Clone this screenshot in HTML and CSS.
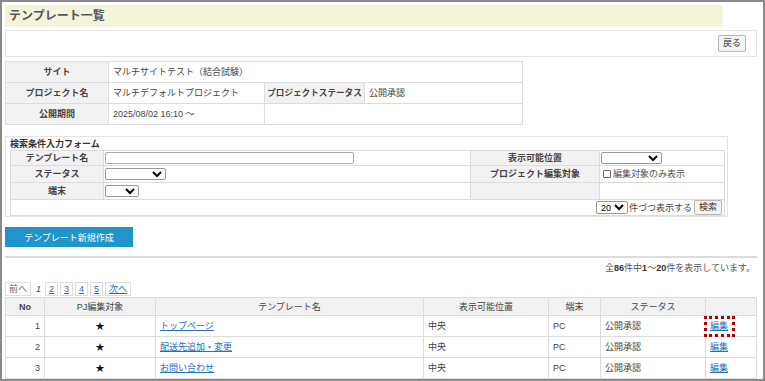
FILE: index.html
```html
<!DOCTYPE html>
<html lang="ja">
<head>
    <meta charset="UTF-8">
    <title>テンプレート一覧</title>
    <link rel="stylesheet" href="styles.css">
</head>
<body>
    <div class="frame">
        <h1 class="page-title">テンプレート一覧</h1>

        <div class="tool-box">
            <button class="btn">戻る</button>
        </div>

        <table class="info-table">
            <colgroup>
                <col class="w-label">
                <col class="w-value">
                <col class="w-label2">
                <col>
            </colgroup>
            <tr>
                <th>サイト</th>
                <td colspan="3">マルチサイトテスト（結合試験）</td>
            </tr>
            <tr>
                <th>プロジェクト名</th>
                <td>マルチデフォルトプロジェクト</td>
                <th class="narrow">プロジェクトステータス</th>
                <td>公開承認</td>
            </tr>
            <tr>
                <th>公開期間</th>
                <td>2025/08/02 16:10 ～</td>
                <td colspan="2"></td>
            </tr>
        </table>

        <div class="search-box">
            <div class="search-title">検索条件入力フォーム</div>
            <table class="search-table">
                <colgroup>
                    <col class="s-label">
                    <col class="s-input">
                    <col class="s-label2">
                    <col>
                </colgroup>
                <tr class="first">
                    <th>テンプレート名</th>
                    <td><input type="text" class="text-input"></td>
                    <th>表示可能位置</th>
                    <td><select class="sel sel-pos"></select></td>
                </tr>
                <tr>
                    <th>ステータス</th>
                    <td><select class="sel sel-status"></select></td>
                    <th>プロジェクト編集対象</th>
                    <td><label class="check"><span class="box"></span>編集対象のみ表示</label></td>
                </tr>
                <tr>
                    <th>端末</th>
                    <td><select class="sel sel-device"></select></td>
                    <th></th>
                    <td></td>
                </tr>
                <tr class="last">
                    <td colspan="4">
                        <div class="search-actions">
                            <select class="sel sel-count"><option>20</option></select><span class="per">件づつ表示する</span><button class="btn">検索</button>
                        </div>
                    </td>
                </tr>
            </table>
        </div>

        <div class="create-row">
            <button class="btn-primary">テンプレート新規作成</button>
        </div>

        <div class="count">全<b>86</b>件中<b>1</b>～<b>20</b>件を表示しています。</div>

        <div class="pager">
            <span class="page disabled">前へ</span>
            <span class="current">1</span>
            <a class="page" href="#">2</a>
            <a class="page" href="#">3</a>
            <a class="page" href="#">4</a>
            <a class="page" href="#">5</a>
            <a class="page" href="#">次へ</a>
        </div>

        <table class="list-table">
            <thead>
                <tr>
                    <th class="c-no">No</th>
                    <th class="c-pj">PJ編集対象</th>
                    <th class="c-name">テンプレート名</th>
                    <th class="c-pos">表示可能位置</th>
                    <th class="c-dev">端末</th>
                    <th class="c-status">ステータス</th>
                    <th class="c-edit"></th>
                </tr>
            </thead>
            <tbody id="listBody"></tbody>
        </table>
    </div>

    <script>
        // 一覧データ
        const rows = [
            { no: 1, name: 'トップページ', pos: '中央', device: 'PC', status: '公開承認' },
            { no: 2, name: '配送先追加・変更', pos: '中央', device: 'PC', status: '公開承認' },
            { no: 3, name: 'お問い合わせ', pos: '中央', device: 'PC', status: '公開承認' }
        ];

        const body = document.getElementById('listBody');
        rows.forEach((row, index) => {
            const tr = document.createElement('tr');
            tr.innerHTML = `
                <td class="num">${row.no}</td>
                <td class="center">★</td>
                <td><a href="#">${row.name}</a></td>
                <td>${row.pos}</td>
                <td>${row.device}</td>
                <td>${row.status}</td>
                <td><a href="#" class="${index === 0 ? 'edit marked' : 'edit'}">編集</a></td>
            `;
            body.appendChild(tr);
        });
    </script>
</body>
</html>
```

FILE: styles.css
```css
:root {
    --border: #dcdcdc;
    --label-bg: #f2f2f2;
    --text: #444444;
    --link: #2a70b8;
}

* {
    box-sizing: border-box;
}

body {
    margin: 0;
    font-family: 'Liberation Sans', 'Noto Sans CJK JP', sans-serif;
    font-size: 9px;
    line-height: 12px;
    color: var(--text);
    background: #ffffff;
}

.frame {
    width: 765px;
    height: 381px;
    overflow: hidden;
    border: 2px solid #8a8a8a;
    padding: 3px 6px 0 3px;
}

.page-title {
    margin: 0 34px 3px 0;
    height: 22px;
    padding: 0 4px;
    background: #f4f4dc;
    font-size: 12px;
    line-height: 22px;
    color: #555555;
}

.tool-box {
    height: 27px;
    border: 1px solid #e4e4e4;
    display: flex;
    justify-content: flex-end;
    align-items: center;
    padding-right: 10px;
}

.btn {
    font-family: inherit;
    font-size: 9px;
    line-height: 11px;
    color: #333333;
    background: #f4f4f4;
    border: 1px solid #b8b8b8;
    border-radius: 2px;
    padding: 2px 4px;
    cursor: pointer;
    white-space: nowrap;
}

table {
    border-collapse: collapse;
    table-layout: fixed;
}

th,
td {
    white-space: nowrap;
    overflow: hidden;
}

/* 基本情報 */
.info-table {
    margin-top: 4px;
    width: 518px;
}

.w-label { width: 103px; }
.w-value { width: 156px; }
.w-label2 { width: 100px; }

.info-table th,
.info-table td {
    border: 1px solid var(--border);
    height: 21px;
    padding: 0 4px;
    text-align: left;
    font-weight: normal;
}

.info-table th {
    background: var(--label-bg);
    font-weight: bold;
    text-align: center;
}

.info-table th.narrow {
    padding: 0;
    font-size: 8.6px;
}

/* 検索フォーム */
.search-box {
    margin-top: 11px;
    width: 723px;
    border: 1px solid #e4e4e4;
    padding: 1px 2px 0 4px;
}

.search-title {
    font-weight: bold;
    color: #333333;
    height: 12px;
    line-height: 12px;
}

.search-table {
    width: 715px;
}

.s-label { width: 93px; }
.s-input { width: 367px; }
.s-label2 { width: 129px; }

.search-table th,
.search-table td {
    border: 1px solid var(--border);
    height: 17px;
    padding: 0 1px;
}

.search-table tr.first > * {
    height: 15px;
}

.search-table tr.last > * {
    height: 16px;
    padding: 0 2px;
}

.search-table th {
    background: var(--label-bg);
    font-weight: bold;
    color: #444444;
}

.text-input {
    display: block;
    width: 249px;
    height: 12px;
    border: 1px solid #aaaaaa;
    border-radius: 2px;
    padding: 0;
}

.sel {
    display: block;
    height: 12px;
    font-family: inherit;
    font-size: 9px;
    border: 1px solid #999999;
    border-radius: 2px;
    padding: 0;
    background: #ffffff;
}

.sel-pos { width: 61px; }
.sel-status { width: 61px; }
.sel-device { width: 34px; }

.sel-count {
    width: 32px;
    height: 13px;
}

.check {
    display: flex;
    align-items: center;
    gap: 2px;
    padding-left: 2px;
    color: #555555;
}

.box {
    width: 8px;
    height: 8px;
    border: 1px solid #666666;
    border-radius: 1px;
}

.search-actions {
    display: flex;
    justify-content: flex-end;
    align-items: center;
}

.search-actions .btn {
    padding: 1px 4px;
}

.per {
    margin: 0 2px 0 1px;
}

/* 新規作成 */
.create-row {
    margin-top: 10px;
    padding-bottom: 9px;
    border-bottom: 2px solid #dddddd;
}

.btn-primary {
    display: block;
    width: 128px;
    height: 20px;
    font-family: inherit;
    font-size: 9px;
    color: #ffffff;
    background: #2195c9;
    border: none;
    cursor: pointer;
}

.count {
    text-align: right;
    padding-right: 2px;
    margin-top: 4px;
    height: 12px;
    color: #555555;
}

.count b {
    color: #333333;
}

/* ページ送り */
.pager {
    margin-top: 8px;
    display: flex;
    align-items: center;
    gap: 2px;
    height: 14px;
}

.page {
    display: block;
    border: 1px solid #dddddd;
    height: 14px;
    line-height: 12px;
    padding: 0 3px;
    color: var(--link);
}

.page.disabled {
    color: #666666;
}

.current {
    font-style: italic;
    padding: 0 2px 0 3px;
}

/* 一覧 */
.list-table {
    margin-top: 1px;
    width: 752px;
}

.list-table th,
.list-table td {
    border: 1px solid var(--border);
    padding: 0 4px;
    height: 21px;
    text-align: left;
}

.list-table th {
    height: 18px;
    background: var(--label-bg);
    font-weight: normal;
    text-align: center;
    color: #444444;
}

.list-table th.c-no {
    font-weight: bold;
}

.c-no { width: 39px; }
.c-pj { width: 111px; }
.c-name { width: 268px; }
.c-pos { width: 125px; }
.c-dev { width: 52px; }
.c-status { width: 105px; }

.list-table .num {
    text-align: right;
}

.list-table .center {
    text-align: center;
    color: #111111;
}

.list-table a {
    color: var(--link);
}

.list-table td:last-child {
    overflow: visible;
}

/* 注目枠 */
.edit.marked {
    position: relative;
}

.edit.marked::after {
    content: "";
    position: absolute;
    top: -5px;
    bottom: -6px;
    left: -6px;
    right: -7px;
    border: 3px dotted #b00000;
}
```
